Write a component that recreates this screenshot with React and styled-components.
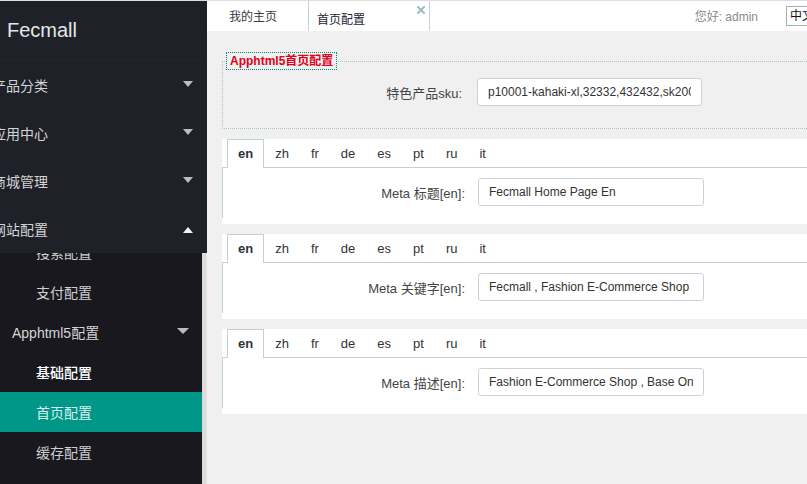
import React from "react";
import styled, { createGlobalStyle } from "styled-components";

const FONT = `"Liberation Sans", "Noto Sans CJK SC", sans-serif`;

const GlobalStyle = createGlobalStyle`
  html, body {
    margin: 0;
    padding: 0;
    overflow: hidden;
    background: #f0f0f0;
    font-family: ${FONT};
  }
  * { box-sizing: border-box; }
`;

const Page = styled.div`
  display: flex;
  flex-direction: column;
  width: 807px;
  height: 484px;
  border-top: 1px solid #dedede;
  overflow: hidden;
`;

const Body = styled.div`
  flex: 1;
  display: flex;
  min-height: 0;
`;

/* ---------- Sidebar ---------- */
const Sidebar = styled.aside`
  width: 207px;
  flex-shrink: 0;
  display: flex;
  flex-direction: column;
  background: #18181e;
`;

const SideTop = styled.div`
  background: #1f2128;
`;

const Logo = styled.div`
  height: 60px;
  line-height: 59px;
  padding-left: 7px;
  font-size: 20px;
  color: #e4e6e8;
  border-bottom: 1px solid #23252c;
`;

const NavItem = styled.div`
  height: 48px;
  display: flex;
  align-items: center;
  padding-right: 14px;
  font-size: 14px;
  color: #d4d4d6;
`;

const NavText = styled.span`
  margin-left: -8px;
`;

const Caret = styled.span`
  margin-left: auto;
  margin-top: ${(p) => (p.$up ? "1px" : "-3px")};
  width: 0;
  height: 0;
  border-left: ${(p) => p.$size || 5}px solid transparent;
  border-right: ${(p) => p.$size || 5}px solid transparent;
  ${(p) =>
    p.$up
      ? `border-bottom: 6px solid ${p.$color};`
      : `border-top: 6px solid ${p.$color};`}
`;

const SideScroll = styled.div`
  flex: 1;
  display: flex;
  overflow: hidden;
  min-height: 0;
`;

const SubList = styled.div`
  width: 202px;
  margin-top: -21px;
`;

const ScrollTrack = styled.div`
  width: 5px;
  background: #dcdcdc;
  border-right: 1px solid #e6e6e6;
`;

const SubItem = styled.div`
  height: 40px;
  display: flex;
  align-items: center;
  padding: 0 13px 0 ${(p) => p.$indent}px;
  font-size: 14px;
  color: ${(p) => p.$color || "#cfcfd1"};
  background: ${(p) => (p.$active ? "#009688" : "transparent")};
  font-weight: ${(p) => (p.$strong ? 500 : 400)};
`;

/* ---------- Main ---------- */
const Main = styled.main`
  flex: 1;
  min-width: 0;
  display: flex;
  flex-direction: column;
  background: #f0f0f0;
  overflow: hidden;
`;

const TopBar = styled.div`
  height: 30px;
  flex-shrink: 0;
  display: flex;
  align-items: stretch;
  background: #fff;
`;

const PageTab = styled.div`
  position: relative;
  width: ${(p) => p.$w}px;
  flex-shrink: 0;
  display: flex;
  align-items: center;
  padding: ${(p) => p.$pad};
  border-right: 1px solid #c3d2d8;
  font-size: 12px;
  color: ${(p) => p.$color};
`;

const CloseBtn = styled.svg`
  position: absolute;
  top: 5px;
  right: 4px;
`;

const Greeting = styled.div`
  margin-left: auto;
  display: flex;
  align-items: center;
  padding-bottom: 1px;
  font-size: 12px;
  color: #8a8a8a;
`;

const LangBox = styled.div`
  flex-shrink: 0;
  align-self: center;
  width: 60px;
  height: 20px;
  margin: 0 -39px 1px 28px;
  padding-left: 3px;
  border: 1px solid #9fb3bb;
  font-size: 12px;
  line-height: 18px;
  color: #111;
  background: #fff;
`;

const Content = styled.div`
  padding: 21px 0 0 15px;
`;

const FieldSet = styled.fieldset`
  margin: 0 -10px 0 0;
  padding: 8px 0 22px 3px;
  min-width: 0;
  border: 1px dotted #a9c4cb;
`;

const Legend = styled.legend`
  padding: 0 3px;
  border: 1px dotted #00897b;
  font-size: 12px;
  font-weight: bold;
  line-height: 16px;
  color: #e0001b;
`;

const Row = styled.div`
  display: flex;
  align-items: center;
`;

const Label = styled.label`
  width: ${(p) => p.$w}px;
  flex-shrink: 0;
  text-align: right;
  font-size: 13px;
  color: #444;
  white-space: nowrap;
`;

const Field = styled.input`
  width: ${(p) => p.$w}px;
  height: 28px;
  margin-left: ${(p) => p.$gap}px;
  padding: 0 10px;
  border: 1px solid #cdd2d8;
  border-radius: 3px;
  background: #fff;
  font-family: ${FONT};
  font-size: 12px;
  color: #333;
  outline: none;
`;

const Panel = styled.section`
  margin-top: 10px;
  padding-bottom: 6px;
  background: #fff;
`;

const TabBar = styled.div`
  height: 28px;
  display: flex;
  align-items: flex-start;
  padding-left: 5px;
`;

const LangTab = styled.div`
  position: relative;
  z-index: 1;
  height: ${(p) => (p.$active ? 29 : 28)}px;
  padding: 0 10px;
  border: 1px solid ${(p) => (p.$active ? "#bfd2d9" : "transparent")};
  border-bottom: 0;
  background: #fff;
  font-size: 13px;
  line-height: 27px;
  color: #333;
  font-weight: ${(p) => (p.$active ? 600 : 400)};
`;

const TabBody = styled.div`
  padding: 10px 0 12px;
  border-top: 1px solid #bfd2d9;
  border-left: 1px solid #bfd2d9;
`;

const langs = ["en", "zh", "fr", "de", "es", "pt", "ru", "it"];

const panels = [
  { label: "Meta 标题[en]:", value: "Fecmall Home Page En" },
  {
    label: "Meta 关键字[en]:",
    value: "Fecmall , Fashion E-Commerce Shop In Yii2 Framework",
  },
  {
    label: "Meta 描述[en]:",
    value: "Fashion E-Commerce Shop , Base On Yii2 Framework",
  },
];

const topNav = [
  { text: "产品分类" },
  { text: "应用中心" },
  { text: "商城管理" },
  { text: "网站配置", up: true },
];

const subNav = [
  { text: "搜索配置", indent: 36 },
  { text: "支付配置", indent: 36 },
  { text: "Apphtml5配置", indent: 12, caret: true, color: "#d4d4d6" },
  { text: "基础配置", indent: 36, color: "#ffffff", strong: true },
  { text: "首页配置", indent: 36, active: true, color: "#d8eeec" },
  { text: "缓存配置", indent: 36 },
  { text: "", indent: 36 },
];

export default function App() {
  return (
    <>
      <GlobalStyle />
      <Page>
        <Body>
          <Sidebar>
            <SideTop>
              <Logo>Fecmall</Logo>
              {topNav.map((n) => (
                <NavItem key={n.text}>
                  <NavText>{n.text}</NavText>
                  <Caret $up={n.up} $color={n.up ? "#f2f2f2" : "#bdbdbf"} />
                </NavItem>
              ))}
            </SideTop>
            <SideScroll>
              <SubList>
                {subNav.map((s, i) => (
                  <SubItem
                    key={i}
                    $indent={s.indent}
                    $active={s.active}
                    $color={s.color}
                    $strong={s.strong}
                  >
                    {s.text}
                    {s.caret && <Caret $color="#bdbdbf" $size={6} />}
                  </SubItem>
                ))}
              </SubList>
              <ScrollTrack />
            </SideScroll>
          </Sidebar>

          <Main>
            <TopBar>
              <PageTab $w={102} $pad="0 0 2px 22px" $color="#333a44">
                我的主页
              </PageTab>
              <PageTab $w={121} $pad="4px 0 0 8px" $color="#1c2430">
                首页配置
                <CloseBtn width="8" height="8" viewBox="0 0 8 8">
                  <path
                    d="M1 1L7 7M7 1L1 7"
                    stroke="#9fbcc4"
                    strokeWidth="2"
                    strokeLinecap="square"
                  />
                </CloseBtn>
              </PageTab>
              <Greeting>您好: admin</Greeting>
              <LangBox>中文</LangBox>
            </TopBar>

            <Content>
              <FieldSet>
                <Legend>Apphtml5首页配置</Legend>
                <Row>
                  <Label $w={236}>特色产品sku:</Label>
                  <Field
                    $w={225}
                    $gap={15}
                    readOnly
                    value="p10001-kahaki-xl,32332,432432,sk2003,sk2004,sk2005"
                  />
                </Row>
              </FieldSet>

              {panels.map((p) => (
                <Panel key={p.label}>
                  <TabBar>
                    {langs.map((l, i) => (
                      <LangTab key={l} $active={i === 0}>
                        {l}
                      </LangTab>
                    ))}
                  </TabBar>
                  <TabBody>
                    <Row>
                      <Label $w={242}>{p.label}</Label>
                      <Field $w={226} $gap={13} readOnly value={p.value} />
                    </Row>
                  </TabBody>
                </Panel>
              ))}
            </Content>
          </Main>
        </Body>
      </Page>
    </>
  );
}
